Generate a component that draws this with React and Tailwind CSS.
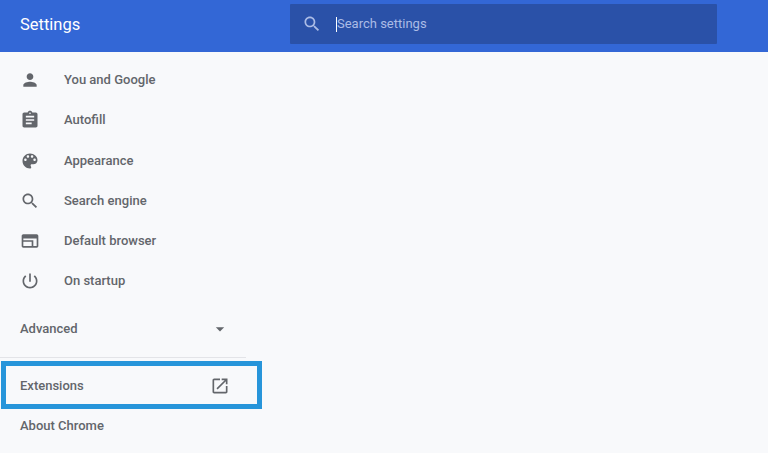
import React from "react";

const ICONS = {
    person: "M12 12c2.21 0 4-1.79 4-4s-1.79-4-4-4-4 1.79-4 4 1.79 4 4 4zm0 2c-2.67 0-8 1.34-8 4v2h16v-2c0-2.66-5.33-4-8-4z",
    assignment:
        "M19 3h-4.18C14.4 1.84 13.3 1 12 1c-1.3 0-2.4.84-2.82 2H5c-1.1 0-2 .9-2 2v14c0 1.1.9 2 2 2h14c1.1 0 2-.9 2-2V5c0-1.1-.9-2-2-2zm-7 0c.55 0 1 .45 1 1s-.45 1-1 1-1-.45-1-1 .45-1 1-1zm2 14H7v-2h7v2zm3-4H7v-2h10v2zm0-4H7V7h10v2z",
    palette:
        "M12 3c-4.97 0-9 4.03-9 9s4.03 9 9 9c.83 0 1.5-.67 1.5-1.5 0-.39-.15-.74-.39-1.01-.23-.26-.38-.61-.38-.99 0-.83.67-1.5 1.5-1.5H16c2.76 0 5-2.24 5-5 0-4.42-4.03-8-9-8zm-5.5 9c-.83 0-1.5-.67-1.5-1.5S5.67 9 6.5 9 8 9.67 8 10.5 7.33 12 6.5 12zm3-4C8.67 8 8 7.33 8 6.5S8.67 5 9.5 5s1.5.67 1.5 1.5S10.33 8 9.5 8zm5 0c-.83 0-1.5-.67-1.5-1.5S13.67 5 14.5 5s1.5.67 1.5 1.5S15.33 8 14.5 8zm3 4c-.83 0-1.5-.67-1.5-1.5S16.67 9 17.5 9s1.5.67 1.5 1.5-.67 1.5-1.5 1.5z",
    search: "M15.5 14h-.79l-.28-.27C15.41 12.59 16 11.11 16 9.5 16 5.91 13.09 3 9.5 3S3 5.91 3 9.5 5.91 16 9.5 16c1.61 0 3.09-.59 4.23-1.57l.27.28v.79l5 4.99L20.49 19l-4.99-5zm-6 0C7.01 14 5 11.99 5 9.5S7.01 5 9.5 5 14 7.01 14 9.5 11.99 14 9.5 14z",
    browser:
        "M20 4H4c-1.1 0-2 .9-2 2v12c0 1.1.9 2 2 2h16c1.1 0 2-.9 2-2V6c0-1.1-.9-2-2-2zM4 18v-5h10v5H4zm16 0h-4v-7H4V9h16v9z",
    power: "M13 3h-2v10h2V3zm4.83 2.17l-1.42 1.42C17.99 7.86 19 9.81 19 12c0 3.87-3.13 7-7 7s-7-3.13-7-7c0-2.19 1.01-4.14 2.58-5.42L6.17 5.17C4.23 6.82 3 9.26 3 12c0 4.97 4.03 9 9 9s9-4.03 9-9c0-2.74-1.23-5.18-3.17-6.83z",
    caret: "M7 10l5 5 5-5z",
    openNew:
        "M19 19H5V5h7V3H5c-1.11 0-2 .9-2 2v14c0 1.1.89 2 2 2h14c1.1 0 2-.9 2-2v-7h-2v7zM14 3v2h3.59l-9.83 9.83 1.41 1.41L19 6.41V10h2V3h-7z",
};

const NAV_ITEMS = [
    { label: "You and Google", icon: "person" },
    { label: "Autofill", icon: "assignment" },
    { label: "Appearance", icon: "palette" },
    { label: "Search engine", icon: "search" },
    { label: "Default browser", icon: "browser" },
    { label: "On startup", icon: "power" },
];

function Icon({ name, className }) {
    return (
        <svg viewBox="0 0 24 24" fill="currentColor" className={className}>
            <path d={ICONS[name]} />
        </svg>
    );
}

function App() {
    return (
        <div className="flex h-[453px] w-[768px] flex-col overflow-hidden bg-[#f8f9fb] font-['Roboto',sans-serif]">
            <header className="flex h-[52px] shrink-0 bg-[#3367d6] pl-5">
                <h1 className="flex h-[51px] w-[270px] items-center text-[16.5px] font-normal text-white">
                    Settings
                </h1>
                <div className="mt-1 flex h-10 w-[427px] items-center rounded-[1px] bg-[#2a51a8] pl-3 text-[#abbce6]">
                    <Icon name="search" className="h-5 w-5" />
                    <div className="ml-[14px] flex items-center">
                        <span className="h-[15px] w-px bg-white" />
                        <span className="text-[13px] font-normal">
                            Search settings
                        </span>
                    </div>
                </div>
            </header>

            <nav className="w-[246px] pt-2 text-[13px] font-medium text-[#63666b]">
                {NAV_ITEMS.map((item) => (
                    <div
                        key={item.label}
                        className="flex h-10 items-center pl-5 [&:nth-child(3)]:mt-px"
                    >
                        <Icon name={item.icon} className="h-5 w-5" />
                        <span className="ml-6">{item.label}</span>
                    </div>
                ))}

                <div className="mt-2 flex h-10 items-center justify-between pl-5 pr-4">
                    <span>Advanced</span>
                    <Icon name="caret" className="h-5 w-5" />
                </div>
                <div className="my-2 h-px bg-[#e3e4e8]" />

                <div className="relative flex h-10 items-center justify-between pl-5 pr-4">
                    <span>Extensions</span>
                    <Icon name="openNew" className="h-5 w-5" />
                    <div className="absolute left-px top-[-5px] h-12 w-[261px] border-[5px] border-[#2795da]" />
                </div>
                <div className="flex h-10 items-center pl-5">About Chrome</div>
            </nav>
        </div>
    );
}

export default App;
